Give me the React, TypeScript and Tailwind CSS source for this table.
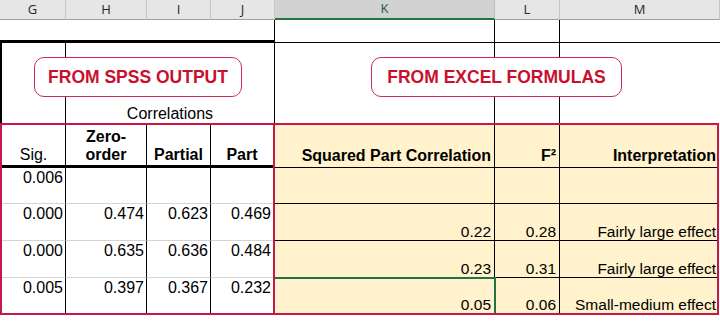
const colHeads = [
  { label: 'G', cls: 'w-[66px]' },
  { label: 'H', cls: 'w-[81px]' },
  { label: 'I', cls: 'w-[64px]' },
  { label: 'J', cls: 'w-[64px]' },
  { label: 'K', cls: 'w-[220px]', selected: true },
  { label: 'L', cls: 'w-[65px]' },
  { label: 'M', cls: 'w-[160px]' },
];

const spssRows = [
  ['0.006', '', '', ''],
  ['0.000', '0.474', '0.623', '0.469'],
  ['0.000', '0.635', '0.636', '0.484'],
  ['0.005', '0.397', '0.367', '0.232'],
];

const excelRows = [
  ['', '', ''],
  ['0.22', '0.28', 'Fairly large effect'],
  ['0.23', '0.31', 'Fairly large effect'],
  ['0.05', '0.06', 'Small-medium effect'],
];

export default function App() {
  return (
    <div className="w-[720px] h-[324px] overflow-hidden bg-white text-black font-['Liberation_Sans',Arial,sans-serif]">
      {/* Column letters */}
      <div className="flex h-[20px] font-['Open_Sans',sans-serif] text-[13px]">
        {colHeads.map((c) =>
          c.selected ? (
            <div
              key={c.label}
              className={`${c.cls} flex items-center justify-center bg-[#d2d2d2] border-r border-r-[#bcbcbc] border-b-2 border-b-[#217346] text-[#1e5b37]`}
            >
              {c.label}
            </div>
          ) : (
            <div
              key={c.label}
              className={`${c.cls} flex items-center justify-center bg-[#e6e6e6] border-r border-r-[#c6c6c6] border-b border-b-[#9e9e9e] text-[#262626]`}
            >
              {c.label}
            </div>
          )
        )}
      </div>

      {/* Row 1 */}
      <div className="flex h-[23px]">
        <div className="w-[274px] border-b-[3px] border-black" />
        <div className="w-[221px] border-x border-b border-black" />
        <div className="w-[65px] border-r border-b border-black" />
        <div className="w-[160px] border-b border-black" />
      </div>

      {/* Row 2 with labels */}
      <div className="relative flex h-[80px]">
        <div className="w-[66px] border-l-2 border-r border-black" />
        <div className="w-[208px] flex items-end justify-center pb-[1px] text-[16px] leading-4">
          Correlations
        </div>
        <div className="w-[221px] border-x border-black" />
        <div className="w-[65px] border-r border-black" />
        <div className="w-[160px]" />

        <div className="absolute left-[34px] top-[14px] w-[208px] h-[40px] flex items-center justify-center rounded-[10px] border border-[#d02a52] bg-white text-[17.5px] font-bold text-[#c8102e]">
          FROM SPSS OUTPUT
        </div>
        <div className="absolute left-[371px] top-[14px] w-[251px] h-[40px] flex items-center justify-center rounded-[10px] border border-[#d02a52] bg-white text-[17.5px] font-bold text-[#c8102e]">
          FROM EXCEL FORMULAS
        </div>
      </div>

      {/* Tables */}
      <div className="flex">
        {/* SPSS output */}
        <div className="w-[275px] border-2 border-[#c8184a] grid grid-cols-[64px_81px_64px_62px] grid-rows-[43px_36px_37px_37px_35px]">
          <div className="flex items-end justify-center pb-[1px] border-r border-b-[3px] border-black text-[16px] leading-[18px]">
            Sig.
          </div>
          <div className="flex items-end justify-center pb-[1px] border-r border-b-[3px] border-black text-center text-[16px] leading-[18px] font-bold">
            Zero-
            <br />
            order
          </div>
          <div className="flex items-end justify-center pb-[1px] border-r border-b-[3px] border-black text-[16px] leading-[18px] font-bold">
            Partial
          </div>
          <div className="flex items-end justify-center pb-[1px] border-b-[3px] border-black text-[16px] leading-[18px] font-bold">
            Part
          </div>

          {spssRows.map((row, r) =>
            row.map((val, c) => (
              <div
                key={`${r}-${c}`}
                className={[
                  'text-right pr-[2px] pt-[1px] text-[16px] leading-[18px]',
                  c < 3 ? 'border-r border-r-black' : '',
                  r < 3 ? 'border-b border-b-[#d4d4d4]' : '',
                ].join(' ')}
              >
                {val}
              </div>
            ))
          )}
        </div>

        {/* Excel formulas */}
        <div className="w-[444px] border-2 border-l-0 border-[#c8184a] bg-[#fff2cc] grid grid-cols-[220px_65px_157px] grid-rows-[43px_36px_37px_37px_35px]">
          <div className="flex items-end justify-end pr-[3px] pb-[2px] border-r border-b border-black text-[16px] leading-[18px] font-bold">
            Squared Part Correlation
          </div>
          <div className="flex items-end justify-end pr-[3px] pb-[2px] border-r border-b border-black text-[16px] leading-[18px] font-bold">
            F²
          </div>
          <div className="flex items-end justify-end pr-[1px] pb-[2px] border-b border-black text-[16px] leading-[18px] font-bold">
            Interpretation
          </div>

          {excelRows.map((row, r) =>
            row.map((val, c) => (
              <div
                key={`${r}-${c}`}
                className={[
                  'relative flex items-end justify-end text-[15.5px] leading-4',
                  c < 2 ? 'border-r border-r-black pr-[3px]' : 'pr-[1px]',
                  r < 3 ? 'border-b border-b-black' : '',
                ].join(' ')}
              >
                {val}
                {r === 3 && c === 0 && (
                  <div className="absolute -top-[1px] left-0 -right-[2px] bottom-0 border-t-2 border-r-2 border-[#217346]" />
                )}
              </div>
            ))
          )}
        </div>
      </div>
    </div>
  );
}
